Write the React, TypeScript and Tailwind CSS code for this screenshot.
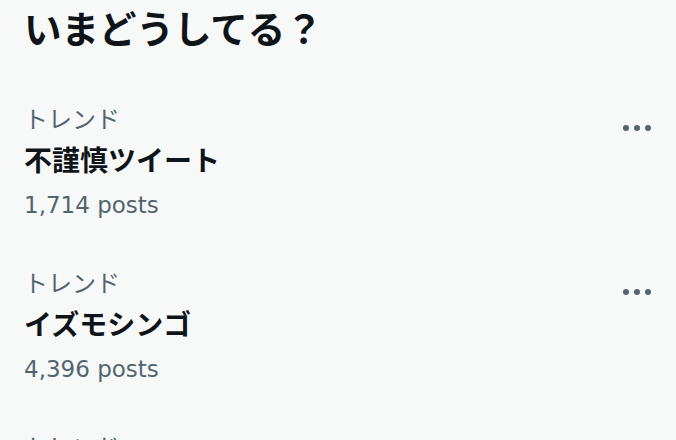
type Trend = {
  label: string;
  title: string;
  posts: string;
};

const trends: Trend[] = [
  { label: "トレンド", title: "不謹慎ツイート", posts: "1,714 posts" },
  { label: "トレンド", title: "イズモシンゴ", posts: "4,396 posts" },
  { label: "トレンド", title: "ハーフタイム", posts: "2,051 posts" },
];

const Dots = () => (
  <svg width="30" height="8" viewBox="0 0 30 8" className="text-[#536471]">
    <circle cx="4" cy="4" r="3" fill="currentColor" />
    <circle cx="15" cy="4" r="3" fill="currentColor" />
    <circle cx="26" cy="4" r="3" fill="currentColor" />
  </svg>
);

const TrendRow = ({ trend }: { trend: Trend }) => {
  return (
    <div className="flex flex-row justify-between pl-6 pr-[24px] pt-[19px] pb-[23px]">
      <div className="flex flex-col">
        <span className="text-[24px] leading-[34px] text-[#536471]">{trend.label}</span>
        <span className="text-[28px] leading-[48px] font-bold text-[#0f1419]">{trend.title}</span>
        <span className="text-[23px] leading-[40px] text-[#536471]" style={{ fontFamily: '"DejaVu Sans", "Noto Sans CJK JP", sans-serif' }}>
          {trend.posts}
        </span>
      </div>
      <div className="pt-[21px]">
        <Dots />
      </div>
    </div>
  );
};

export default function App() {
  return (
    <div
      className="w-[676px] h-[440px] overflow-hidden bg-[#f7f9f9]"
      style={{ fontFamily: 'Inter, "Noto Sans CJK JP", sans-serif' }}
    >
      <div className="h-[84px] px-6 pt-[5px]">
        <h2 className="text-[37.5px] leading-[50px] font-bold text-[#0f1419]">いまどうしてる？</h2>
      </div>
      {trends.map((t, i) => (
        <TrendRow key={i} trend={t} />
      ))}
    </div>
  );
}
